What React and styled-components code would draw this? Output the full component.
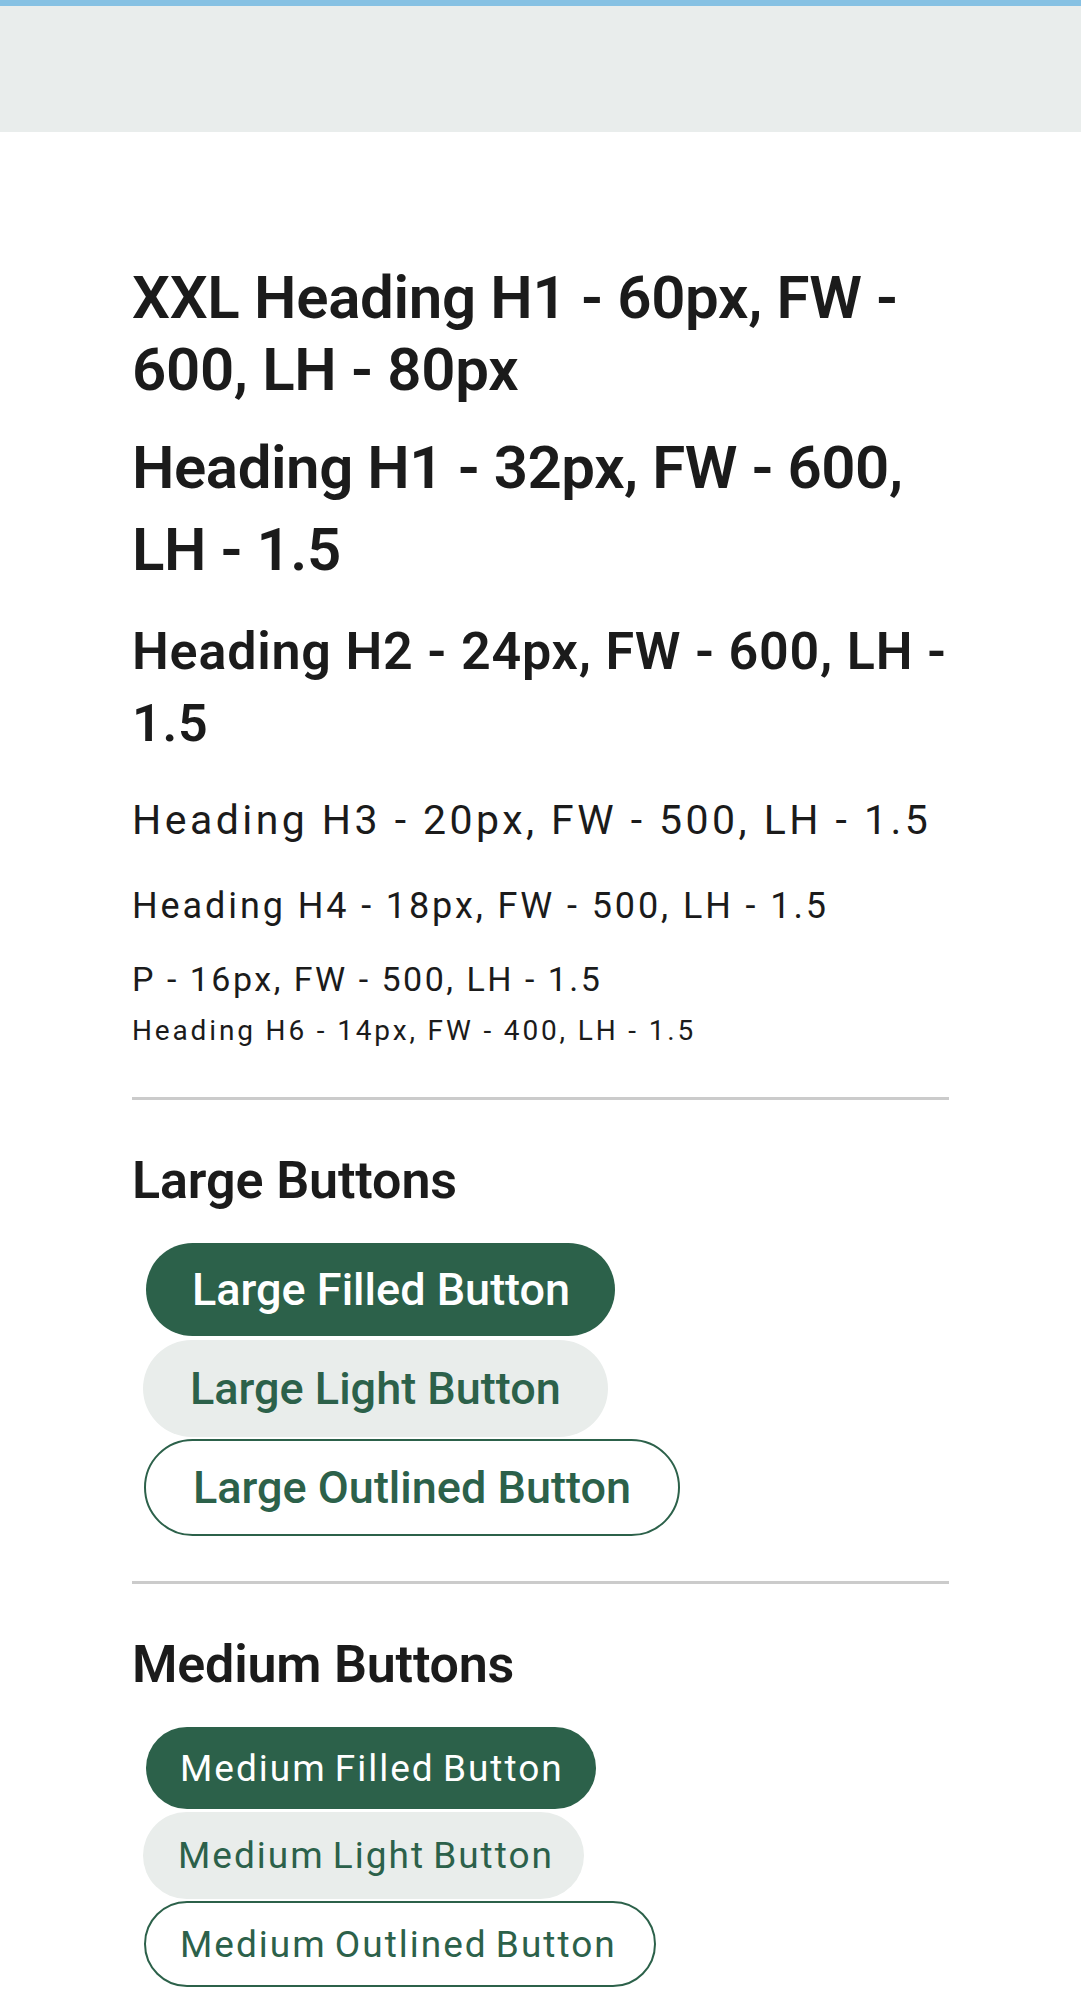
import React from "react";
import styled, { createGlobalStyle, css } from "styled-components";

const GlobalStyle = createGlobalStyle`
  html, body { margin: 0; padding: 0; background: #ffffff; }
  body {
    font-family: Roboto, "Liberation Sans", Arial, sans-serif;
    color: #1b1b1b;
    -webkit-font-smoothing: antialiased;
  }
  * { box-sizing: border-box; }
`;

const Header = styled.header`
  height: 132px;
  background: #e9edec;
  border-top: 6px solid #86c1e3;
`;

const Main = styled.main`
  padding: 0 132px 40px;
  display: flex;
  flex-direction: column;
  align-items: stretch;
`;

const Type = styled.div`
  margin: 0;
  margin-top: ${(p) => p.$mt}px;
  font-size: ${(p) => p.$size}px;
  line-height: ${(p) => p.$lh}px;
  font-weight: ${(p) => p.$weight};
  letter-spacing: ${(p) => p.$ls || 0}px;
  color: #1b1b1b;
`;

const Divider = styled.hr`
  margin: ${(p) => p.$mt}px 0 0;
  border: 0;
  height: 3px;
  background: #cbcbcb;
  width: 100%;
`;

const SectionTitle = styled.h2`
  margin: 45px 0 0;
  font-size: 52px;
  line-height: 72px;
  font-weight: 600;
  letter-spacing: ${(p) => p.$ls}px;
  color: #1b1b1b;
`;

const ButtonStack = styled.div`
  margin-top: 26px;
  display: flex;
  flex-direction: column;
  align-items: flex-start;
`;

const variantStyles = {
  filled: css`
    background: #2c614a;
    color: #ffffff;
    border: 0;
  `,
  light: css`
    background: #e9edeb;
    color: #2c614a;
    border: 0;
  `,
  outlined: css`
    background: #ffffff;
    color: #2c614a;
    border: 2.5px solid #2c614a;
  `,
};

const sizeStyles = {
  large: css`
    font-size: 45px;
    font-weight: 500;
    letter-spacing: 0px;
  `,
  medium: css`
    font-size: 37px;
    font-weight: 400;
    letter-spacing: 2px;
    word-spacing: -3px;
  `,
};

const Button = styled.button`
  font-family: Roboto, "Liberation Sans", Arial, sans-serif;
  display: inline-flex;
  align-items: center;
  border-radius: 999px;
  cursor: pointer;
  height: ${(p) => p.$h}px;
  margin: ${(p) => p.$mt}px 0 0 ${(p) => p.$ml}px;
  padding: 0 ${(p) => p.$pr}px 0 ${(p) => p.$pl}px;
  line-height: 1;
  white-space: nowrap;
  ${(p) => sizeStyles[p.$size]}
  ${(p) => variantStyles[p.$variant]}
`;

const largeButtons = [
  { variant: "filled", label: "Large Filled Button", h: 93, mt: 0, ml: 14, pl: 46, pr: 45 },
  { variant: "light", label: "Large Light Button", h: 97, mt: 4, ml: 11, pl: 47, pr: 47 },
  { variant: "outlined", label: "Large Outlined Button", h: 97, mt: 2, ml: 12, pl: 47, pr: 47 },
];

const mediumButtons = [
  { variant: "filled", label: "Medium Filled Button", h: 82, mt: 0, ml: 14, pl: 34, pr: 32 },
  { variant: "light", label: "Medium Light Button", h: 87, mt: 3, ml: 11, pl: 35, pr: 30 },
  { variant: "outlined", label: "Medium Outlined Button", h: 86, mt: 2, ml: 12, pl: 34, pr: 37 },
];

export default function App() {
  return (
    <>
      <GlobalStyle />
      <Header />
      <Main>
        <Type as="h1" $mt={130} $size={60} $lh={72} $weight={600} $ls={-0.33}>
          XXL Heading H1 - 60px, FW - 600, LH - 80px
        </Type>
        <Type as="h1" $mt={21} $size={60} $lh={82} $weight={600} $ls={-0.45}>
          Heading H1 - 32px, FW - 600, LH - 1.5
        </Type>
        <Type as="h2" $mt={25} $size={52} $lh={72} $weight={600} $ls={0.8}>
          Heading H2 - 24px, FW - 600, LH - 1.5
        </Type>
        <Type as="h3" $mt={30} $size={41} $lh={61} $weight={400} $ls={3.45}>
          Heading H3 - 20px, FW - 500, LH - 1.5
        </Type>
        <Type as="h4" $mt={28} $size={36} $lh={54} $weight={400} $ls={2.9}>
          Heading H4 - 18px, FW - 500, LH - 1.5
        </Type>
        <Type as="p" $mt={21} $size={34} $lh={51} $weight={400} $ls={2.5}>
          P - 16px, FW - 500, LH - 1.5
        </Type>
        <Type as="h6" $mt={5} $size={28} $lh={42} $weight={400} $ls={2.85}>
          Heading H6 - 14px, FW - 400, LH - 1.5
        </Type>

        <Divider $mt={45} />
        <SectionTitle $ls={-0.1}>Large Buttons</SectionTitle>
        <ButtonStack>
          {largeButtons.map((b) => (
            <Button
              key={b.label}
              $size="large"
              $variant={b.variant}
              $h={b.h}
              $mt={b.mt}
              $ml={b.ml}
              $pl={b.pl}
              $pr={b.pr}
            >
              {b.label}
            </Button>
          ))}
        </ButtonStack>

        <Divider $mt={45} />
        <SectionTitle $ls={-0.2}>Medium Buttons</SectionTitle>
        <ButtonStack>
          {mediumButtons.map((b) => (
            <Button
              key={b.label}
              $size="medium"
              $variant={b.variant}
              $h={b.h}
              $mt={b.mt}
              $ml={b.ml}
              $pl={b.pl}
              $pr={b.pr}
            >
              {b.label}
            </Button>
          ))}
        </ButtonStack>
      </Main>
    </>
  );
}
